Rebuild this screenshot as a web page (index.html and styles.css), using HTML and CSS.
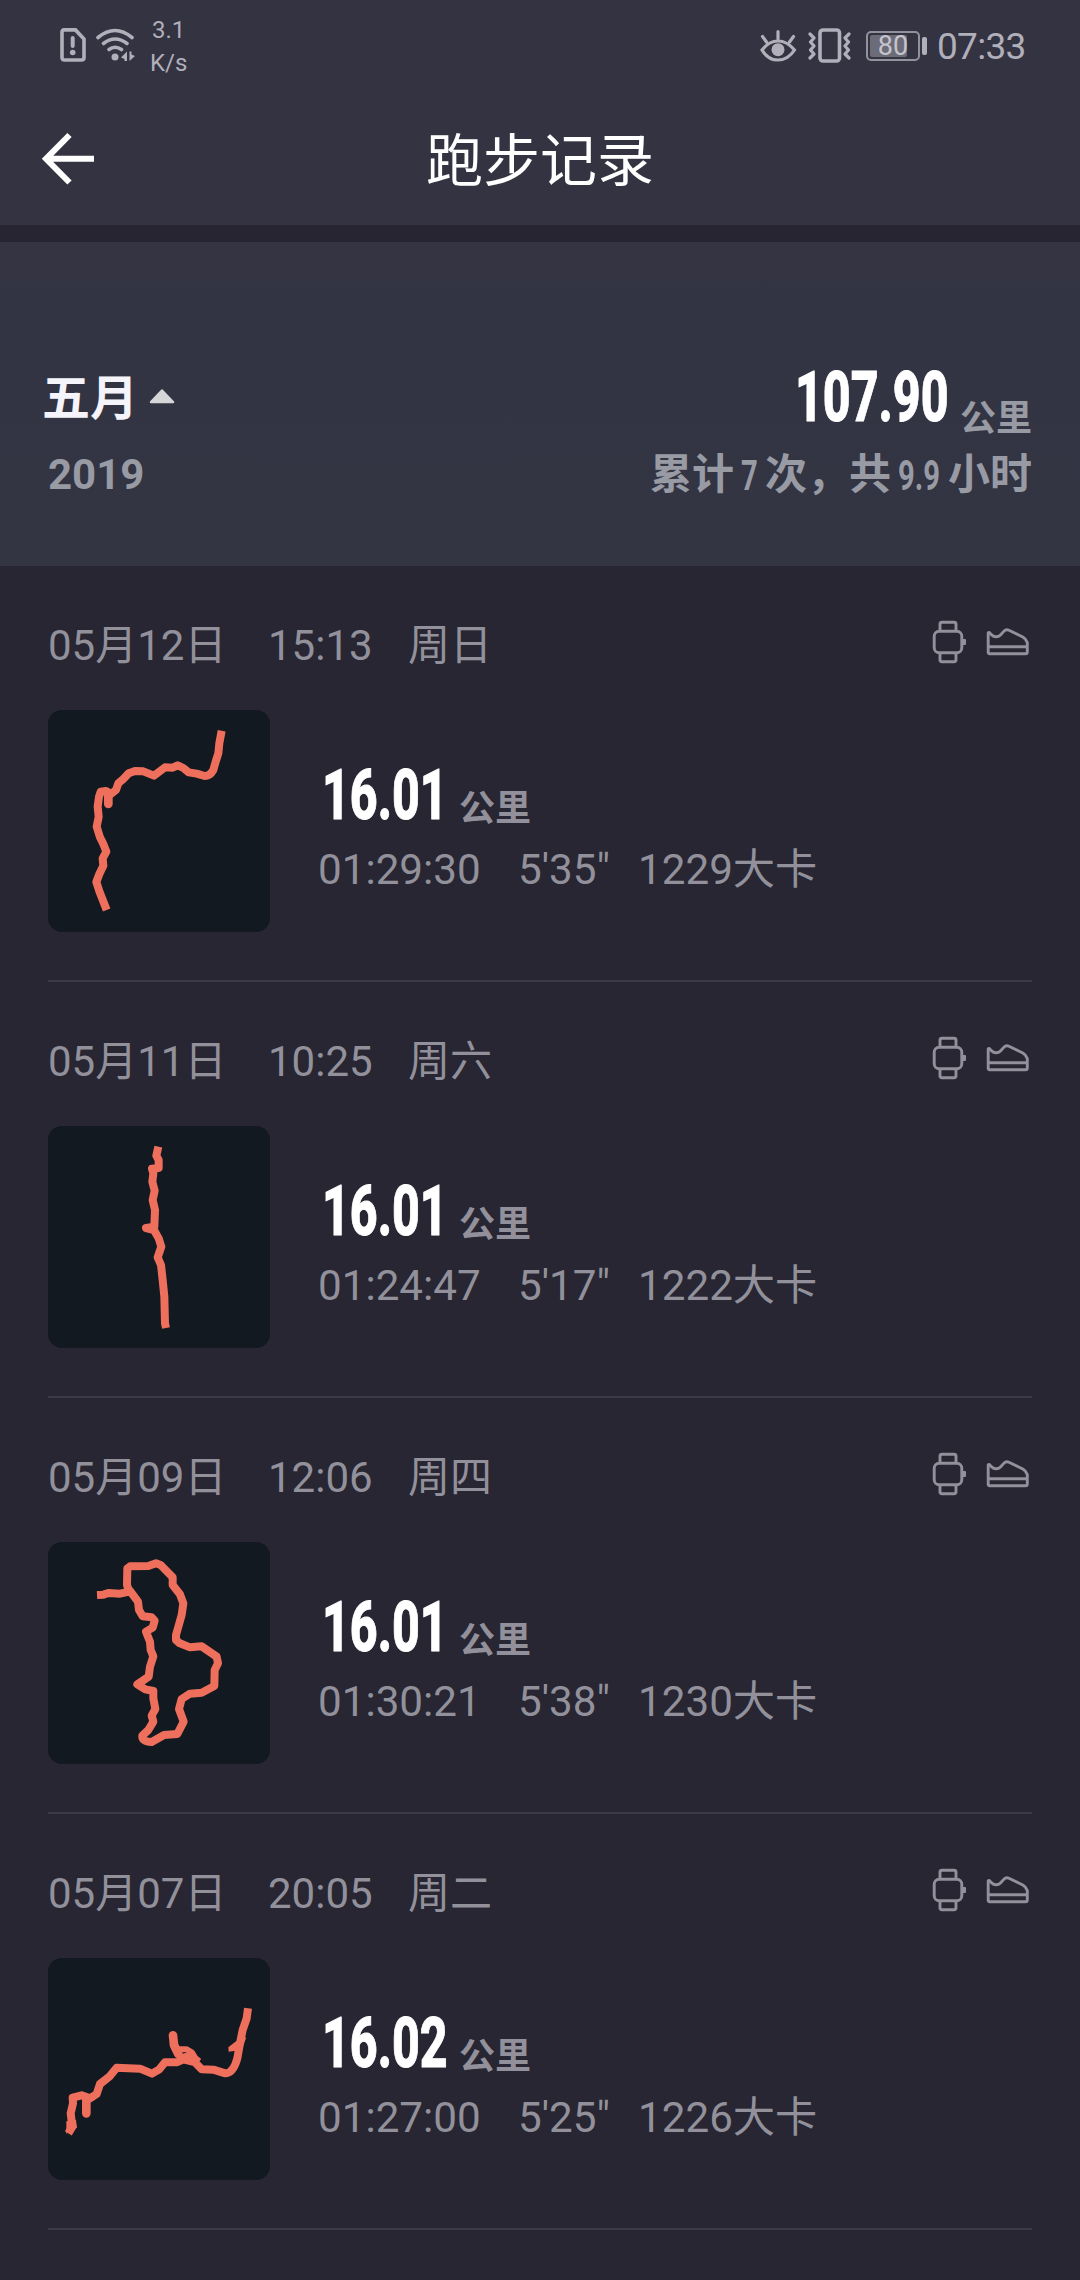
FILE: index.html
```html
<!DOCTYPE html>
<html lang="zh-CN">
<head>
    <meta charset="UTF-8">
    <meta name="viewport" content="width=device-width, initial-scale=1.0">
    <title>跑步记录</title>
    <link rel="stylesheet" href="styles.css">
</head>
<body>
    <!-- shared icons -->
    <svg class="defs" width="0" height="0">
        <symbol id="watch" viewBox="0 0 36 44">
            <g fill="none" stroke="#92919b" stroke-width="2.9">
                <rect x="2.2" y="11.2" width="27.6" height="21.6" rx="5"/>
                <path d="M8 11V4.200q0-2 2-2H22q2 0 2 2V11M8 33v6.800q0 2 2 2H22q2 0 2-2V33"/>
            </g>
            <rect x="30" y="19" width="4" height="6" rx="1" fill="#92919b"/>
        </symbol>
        <symbol id="shoe" viewBox="0 0 44 28">
            <g fill="none" stroke="#92919b" stroke-width="2.9" stroke-linejoin="round">
                <path d="M2.200 5V24q0 1.800 1.800 1.800H39.500q1.800 0 1.800-1.800V14.500q-1-3.500-4.500-5.500L23 2.200q-3-1.400-5 .9L14.500 7q-2 2-5 1.800Q7 8.500 5.800 7L4 5.200Q2.800 4 2.200 5Z"/>
                <path d="M2.500 18.800H41"/>
            </g>
        </symbol>
    </svg>

    <div class="statusbar">
        <svg class="sim" width="26" height="34" viewBox="0 0 26 34">
            <path d="M4 1.900H15.500L24 11V29.500q0 2.500-2.500 2.500H4.500Q2 32 2 29.500V4Q2 1.900 4 1.900Z" fill="none" stroke="#b0afba" stroke-width="3.600"/>
            <path d="M12.700 10V18" stroke="#b0afba" stroke-width="4" stroke-linecap="round"/>
            <circle cx="12.700" cy="24.500" r="2.800" fill="#b0afba"/>
        </svg>
        <svg class="wifi" width="40" height="34" viewBox="0 0 40 34">
            <g fill="none" stroke="#b0afba" stroke-width="3.600" stroke-linecap="round">
                <path d="M2 9.500Q19 -4.500 36 9.500M7.500 15.500Q19 6.500 31 15.500M13 21.500Q19 17 25.500 21.500"/>
            </g>
            <circle cx="19" cy="29" r="3.500" fill="#b0afba"/>
            <path d="M31 23.500V33h-2.500V31L25 29.500ZM33.500 33V23.500h2v3L39 28Z" fill="#b0afba"/>
        </svg>
        <div class="speed">3.1<br>K/s</div>
        <div class="status-right">
            <svg class="eye" width="37" height="34" viewBox="0 0 37 34">
                <g fill="none" stroke="#b0afba" stroke-width="3.200" stroke-linecap="round">
                    <path d="M2 22Q9 13 18 13T34.500 22Q28 32 18 32T2 22ZM18 3.500V11M2.500 8.500L6.500 14M33.500 8.500L29.500 14"/>
                </g>
                <circle cx="18" cy="21.700" r="6.500" fill="#b0afba"/>
            </svg>
            <svg class="vibrate" width="43" height="35" viewBox="0 0 43 35">
                <g fill="none" stroke="#b0afba" stroke-width="3.200">
                    <rect x="12" y="2" width="19.500" height="31" rx="3" stroke-width="3.600"/>
                    <path d="M2 6L6 10L2.500 14L6 18L2.500 22L6 26L2 30M41 6L37 10L40.500 14L37 18L40.500 22L37 26L41 30" stroke-linejoin="round" stroke-linecap="round"/>
                </g>
            </svg>
            <div class="battery"><span class="level"></span><span class="percent">80</span></div>
            <span class="nub"></span>
            <span class="clock">07:33</span>
        </div>
    </div>

    <div class="titlebar">
        <svg class="back" width="54" height="54" viewBox="0 0 54 54">
            <path d="M28.500 3L5 26.800L28.500 50.500M5 26.800H53" fill="none" stroke="#fff" stroke-width="6"/>
        </svg>
        <h1>跑步记录</h1>
    </div>

    <div class="summary">
        <div class="month">
            <div class="month-name">五月
                <svg width="28" height="18" viewBox="0 0 28 18"><path d="M3 15L14 3.500L25 15Z" fill="#d6d6d8" stroke="#d6d6d8" stroke-width="2.500" stroke-linejoin="round"/></svg>
            </div>
            <div class="year">2019</div>
        </div>
        <div class="total">
            <div class="total-distance">
                <div class="num"><span>107.90</span></div>
                <span class="unit">公里</span>
            </div>
            <div class="total-info">累计<div class="count"><span>7</span></div>次，共<div class="hours"><span>9.9</span></div>小时</div>
        </div>
    </div>

    <div class="run">
        <div class="run-head">
            <span class="date">05月12日</span><span class="time">15:13</span><span>周日</span>
            <div class="tags"><svg width="36" height="44"><use href="#watch"/></svg><svg width="44" height="28"><use href="#shoe"/></svg></div>
        </div>
        <div class="run-body">
            <svg class="map" viewBox="24 30 666 666">
                <path d="M545 92L538 130L535 160L527 185L520 210Q510 228 494 228L470 221L446 217L430 204L413 196L398 203L375 202L358 215L342 227L310 214L285 213L266 220L250 237L235 250L228 270L213 282L198 273L182 275L177 290L173 320L176 350L170 380L180 412L190 432L199 455L188 475L190 497L178 522L169 546L178 574L200 630"/>
                <path d="M205 280V312" stroke-width="26" stroke-linecap="round"/>
            </svg>
            <div class="data">
                <div class="distance"><div class="num"><span>16.01</span></div><span class="unit">公里</span></div>
                <div class="stats"><span class="duration">01:29:30</span><span class="pace">5'35"</span><span>1229大卡</span></div>
            </div>
        </div>
    </div>

    <div class="run">
        <div class="run-head">
            <span class="date">05月11日</span><span class="time">10:25</span><span>周六</span>
            <div class="tags"><svg width="36" height="44"><use href="#watch"/></svg><svg width="44" height="28"><use href="#shoe"/></svg></div>
        </div>
        <div class="run-body">
            <svg class="map" viewBox="24 18 666 666">
                <path d="M355 80L349 107L356 120V144L336 146L340 160L337 185L344 212L338 240L345 270L343 320L318 324L342 330L356 355L364 380L353 412L363 435L368 480L373 530L375 610L378 624"/>
            </svg>
            <div class="data">
                <div class="distance"><div class="num"><span>16.01</span></div><span class="unit">公里</span></div>
                <div class="stats"><span class="duration">01:24:47</span><span class="pace">5'17"</span><span>1222大卡</span></div>
            </div>
        </div>
    </div>

    <div class="run">
        <div class="run-head">
            <span class="date">05月09日</span><span class="time">12:06</span><span>周四</span>
            <div class="tags"><svg width="36" height="44"><use href="#watch"/></svg><svg width="44" height="28"><use href="#shoe"/></svg></div>
        </div>
        <div class="run-body">
            <svg class="map" viewBox="24 21 666 666">
                <path d="M171 180L190 179L205 174L240 176L268 170L261 150L262 100L270 94L325 93L348 85L362 90L398 127V150L420 178L430 205L425 240L408 300V315L418 324L450 337L485 334L530 365L534 385L524 405L523 453L485 473L450 476L425 492L417 522L431 560L412 597L372 600L335 621Q305 620 307 602L325 585L340 560L335 542L346 522L340 490V468L316 463L292 448L326 425L330 395L340 364L332 345L330 320L318 290L338 278L344 257L335 247L308 244L297 225L294 200L268 165"/>
            </svg>
            <div class="data">
                <div class="distance"><div class="num"><span>16.01</span></div><span class="unit">公里</span></div>
                <div class="stats"><span class="duration">01:30:21</span><span class="pace">5'38"</span><span>1230大卡</span></div>
            </div>
        </div>
    </div>

    <div class="run">
        <div class="run-head">
            <span class="date">05月07日</span><span class="time">20:05</span><span>周二</span>
            <div class="tags"><svg width="36" height="44"><use href="#watch"/></svg><svg width="44" height="28"><use href="#shoe"/></svg></div>
        </div>
        <div class="run-body">
            <svg class="map" viewBox="24 24 666 666">
                <path d="M624 175L620 205L608 240L600 280L592 325Q580 370 556 370L520 359L485 358L464 336L430 328L410 337L375 337L358 358L336 371L300 356L230 353L208 380L180 402L170 432L150 445L125 436L98 443L99 460L92 490L97 530L85 550"/>
                <path d="M139 450V490M399 256L402 285L415 312" stroke-width="26" stroke-linecap="round"/>
                <path d="M412 298L440 298L456 308L466 324L478 334M422 322L438 318L455 330" stroke-width="18"/>
                <path d="M619 262L605 300L566 305L565 292L590 272ZM79 514L108 510L111 533L79 551Z" fill="#ee6f5b" stroke="none"/>
            </svg>
            <div class="data">
                <div class="distance"><div class="num"><span>16.02</span></div><span class="unit">公里</span></div>
                <div class="stats"><span class="duration">01:27:00</span><span class="pace">5'25"</span><span>1226大卡</span></div>
            </div>
        </div>
    </div>
</body>
</html>
```
FILE: styles.css
```css
* { box-sizing: border-box; }
body { margin: 0; width: 1080px; height: 2280px; overflow: hidden; background: #272632; color: #92919b; font-family: Roboto, "Noto Sans CJK SC", sans-serif; }
svg { display: block; flex: none; }
.defs { position: absolute; }

/* status bar */
.statusbar { display: flex; height: 92px; padding: 0 56px 0 60px; background: #343342; color: #b0afba; }
.sim { margin-top: 28px; }
.wifi { margin: 28px 0 0 10px; }
.speed { margin: 14px 0 0 14px; font-size: 24px; line-height: 33px; text-align: center; }
.status-right { display: flex; align-items: center; height: 92px; margin-left: auto; }
.eye { margin: -2px 11px 0 0; }
.vibrate { margin: -1px 15px 0 0; }
.battery { position: relative; width: 54px; height: 30px; border: 2px solid #92919c; border-radius: 5px; }
.level { position: absolute; left: 2px; top: 2px; width: 37px; height: 22px; border-radius: 2px; background: #6c6b78; }
.percent { position: absolute; left: 0; top: 0; width: 50px; line-height: 27px; font-size: 27px; text-align: center; color: #c5c4cc; }
.nub { width: 5px; height: 18px; margin: 0 10px 0 2px; border-radius: 2px; background: #b0afba; }
.clock { font-size: 37px; line-height: 40px; width: 87px; margin-top: 2px; letter-spacing: -0.7px; }

/* title bar */
.titlebar { position: relative; height: 133px; background: #343342; }
.back { position: absolute; left: 41px; top: 40px; }
h1 { margin: 0; color: #fff; font-size: 57px; font-weight: 400; line-height: 140px; text-align: center; }

/* month summary */
.summary { display: flex; justify-content: space-between; height: 341px; border-top: 17px solid #262531; padding: 113px 48px 0 42px; background: linear-gradient(#353443, #323443 25%, #333543); font-weight: 700; color: #989aa4; }
.month-name { display: flex; align-items: center; gap: 10px; height: 84px; font-size: 48px; line-height: 60px; padding-top: 3px; color: #f5f4fb; }
.month-name svg { margin-top: -6px; }
.year { margin-left: 6px; font-size: 42px; line-height: 72px; }
.total-distance { display: flex; justify-content: flex-end; height: 84px; }
.total-distance .num { width: 153px; margin-right: 12px; line-height: 84px; }
.total-distance .unit { margin-top: 40px; }
.total-info { display: flex; align-items: center; font-size: 42px; line-height: 72px; }

/* condensed digits */
.num { color: #fff; font-size: 71px; font-weight: 800; -webkit-text-stroke: 1px #fff; }
.num span, .count span, .hours span { display: inline-block; transform: scaleX(0.68); transform-origin: left; }
.count { width: 31px; padding-left: 7px; font-size: 43px; }
.hours { width: 57px; padding-left: 7px; font-size: 43px; }
.unit { font-size: 36px; font-weight: 700; line-height: 48px; }

/* run list */
.run { height: 416px; margin: 0 48px; padding-top: 49px; border-bottom: 2px solid #3a3946; }
.run-head { display: flex; height: 60px; margin-bottom: 35px; font-size: 42px; font-weight: 400; line-height: 61px; white-space: nowrap; }
.date { width: 220px; }
.time { width: 140px; }
.tags { display: flex; align-items: center; gap: 18px; margin: -6px 2px 0 auto; }
.run-body { display: flex; }
.map { width: 222px; height: 222px; border-radius: 14px; background: #121921; fill: none; stroke: #ee6f5b; stroke-width: 24; stroke-linejoin: round; }
.data { padding: 55px 0 0 48px; }
.distance { display: flex; height: 70px; }
.distance .num { width: 141px; padding-left: 4px; line-height: 60px; }
.distance .unit { margin-top: 20px; }
.stats { display: flex; font-size: 42.200px; line-height: 70px; white-space: nowrap; }
.duration { width: 200px; }
.pace { width: 120px; }
```
